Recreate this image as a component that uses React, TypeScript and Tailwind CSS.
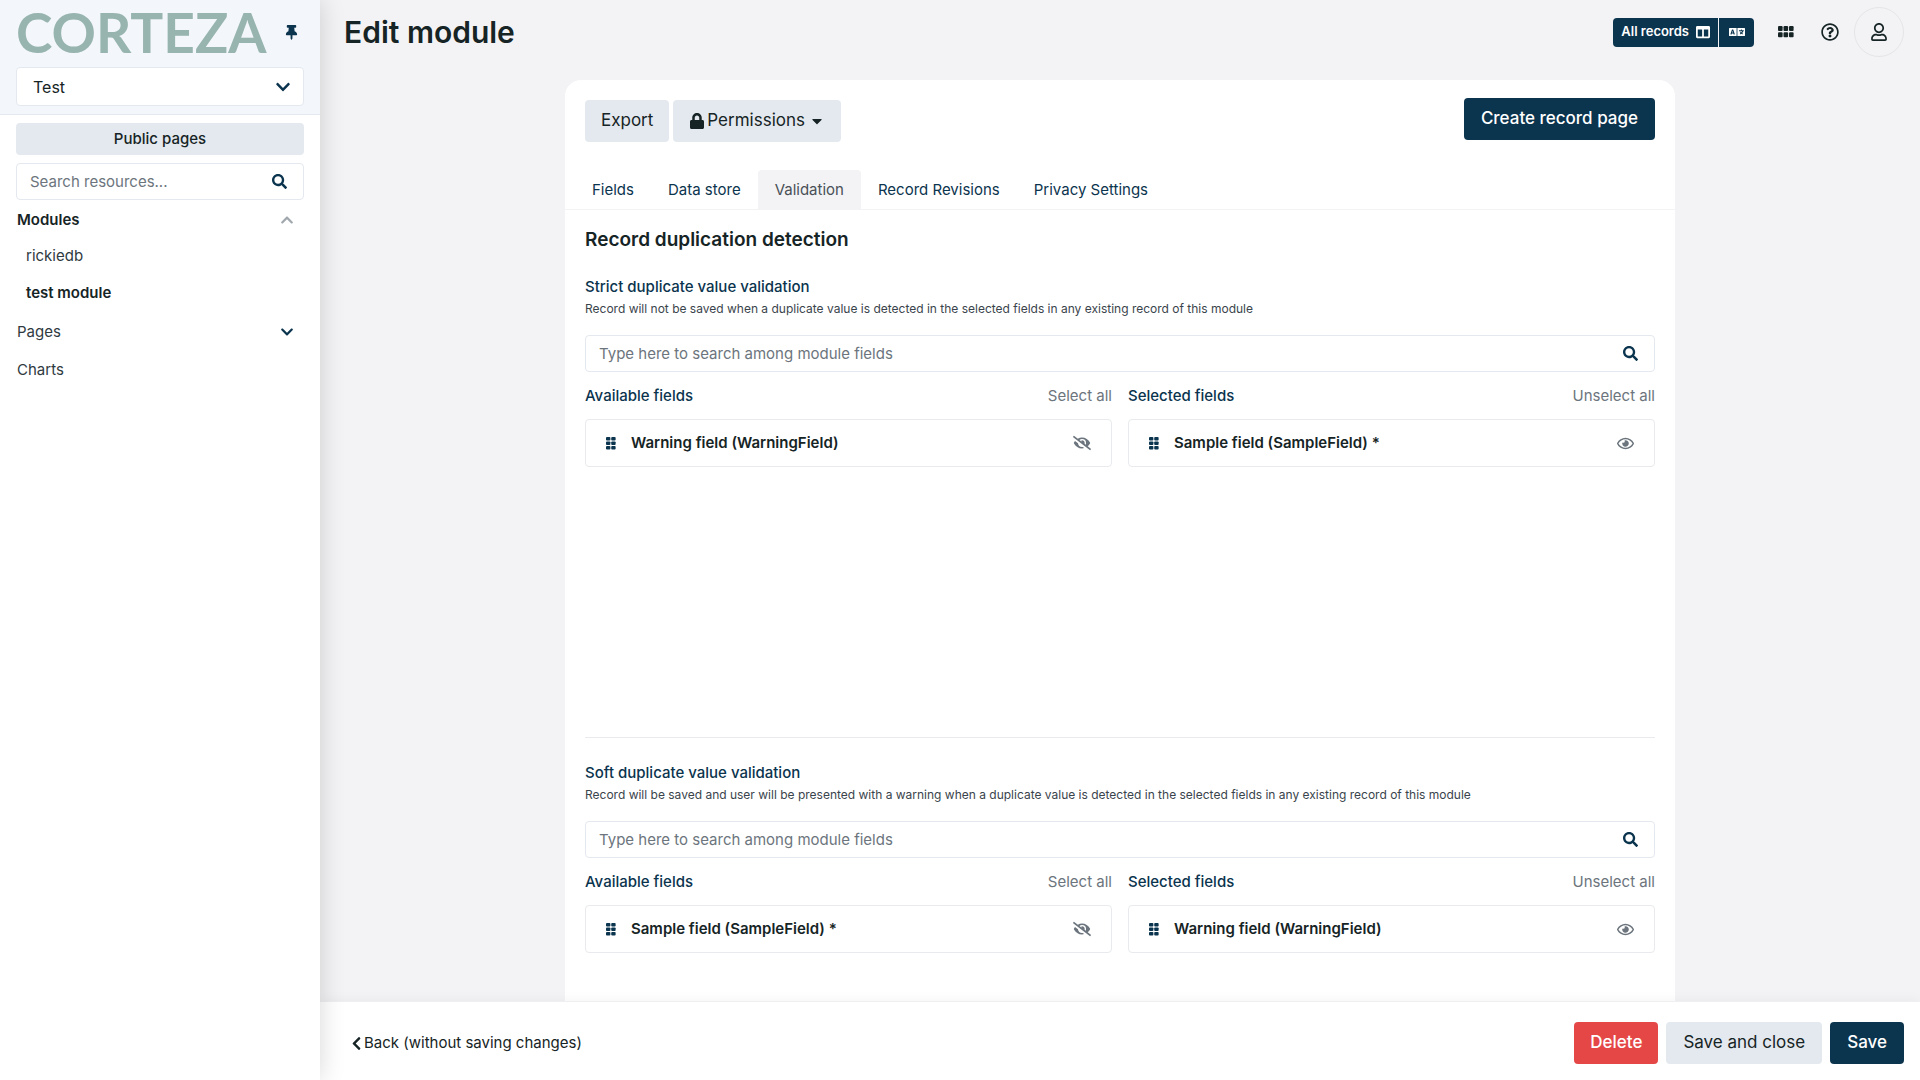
import type { ReactNode } from "react";
import {
  FaCaretDown, FaChevronDown, FaChevronLeft, FaChevronUp, FaColumns, FaEyeSlash,
  FaLanguage, FaLock, FaRegEye, FaRegQuestionCircle, FaRegUser, FaSearch, FaThumbtack,
} from "react-icons/fa";

function DotGrid({ cols, rows, className }: { cols: number; rows: number; className: string }) {
  const cells = Array.from({ length: cols * rows }, (_, i) => ({ x: (i % cols) * 11, y: Math.floor(i / cols) * 11 }));
  return (
    <svg viewBox={`0 0 ${cols * 11 - 1} ${rows * 11 - 1}`} preserveAspectRatio="none" fill="currentColor" aria-hidden="true" className={className}>
      {cells.map(({ x, y }) => <rect key={`${x}-${y}`} x={x} y={y} width="9.2" height="8.8" rx="2" />)}
    </svg>
  );
}

function Sidebar() {
  return (
    <aside className="z-20 flex w-80 shrink-0 flex-col bg-white shadow-[0_0_24px_rgba(0,0,0,0.16)]">
      <div className="border-b border-[#e4e9ef] bg-[#f3f6fa] px-4 pb-2">
        <div className="flex h-[67px] items-center justify-between pr-[5px] pb-[3px]">
          <span className="font-[Lato] text-[55px] leading-[64px] font-bold text-[#97b4af]">CORTEZA</span>
          <button aria-label="Unpin sidebar" className="text-[#0b344e]"><FaThumbtack size={15} /></button>
        </div>
        <button className="flex h-[39px] w-full items-center justify-between rounded border border-[#e4e9ef] bg-white pr-3 pl-4 text-base">
          Test
          <FaChevronDown size={16} className="text-[#0b344e]" />
        </button>
      </div>
      <div className="flex flex-col gap-2 px-4 pt-2">
        <button className="h-8 rounded bg-[#e4e9ef] text-[15px] font-medium">Public pages</button>
        <SearchBox placeholder="Search resources..." />
      </div>
      <nav className="mt-[2px] flex flex-col pr-[26px] pl-[17px] text-[15px]">
        <div className="flex h-9 items-center justify-between font-semibold">
          <a href="#modules">Modules</a>
          <button aria-label="Collapse modules" className="text-[#a0a8ae]"><FaChevronUp size={14} /></button>
        </div>
        <a href="#rickiedb" className="flex h-9 items-center pl-[9px] text-[#2f3a3f]">rickiedb</a>
        <a href="#test-module" className="flex h-[38px] items-center pl-[9px] font-semibold">test module</a>
        <div className="flex h-10 items-center justify-between text-[#2f3a3f]">
          <a href="#pages">Pages</a>
          <button aria-label="Expand pages" className="text-[#0b344e]"><FaChevronDown size={14} /></button>
        </div>
        <a href="#charts" className="flex h-9 items-center text-[#2f3a3f]">Charts</a>
      </nav>
    </aside>
  );
}

function SearchBox({ placeholder }: { placeholder: string }) {
  return (
    <div className="flex h-[37px] items-center rounded border border-[#e4e9ef] bg-white pr-4">
      <input type="text" aria-label={placeholder} placeholder={placeholder}
        className="h-full min-w-0 flex-1 bg-transparent px-[13px] text-[15px] outline-none placeholder:text-[#6c757d]" />
      <button aria-label="Search" className="text-[#0b344e]"><FaSearch size={15} /></button>
    </div>
  );
}

function TopBar() {
  return (
    <header className="flex h-16 shrink-0 items-center justify-between pr-4 pl-6">
      <h1 className="text-[30px] leading-9 font-semibold">Edit module</h1>
      <div className="flex items-center">
        <div className="flex gap-px text-[13px] font-semibold text-white">
          <button className="flex h-[29px] items-center gap-[7px] rounded-l bg-[#0b344e] px-2">All records <FaColumns size={14} /></button>
          <button aria-label="Translate" className="flex h-[29px] w-[35px] items-center justify-center rounded-r bg-[#0b344e]"><FaLanguage size={16} /></button>
        </div>
        <button aria-label="Applications" className="ml-6"><DotGrid cols={3} rows={2} className="h-3 w-4" /></button>
        <button aria-label="Help" className="ml-[27px]"><FaRegQuestionCircle size={18} /></button>
        <button aria-label="Profile" className="ml-[15px] flex size-[50px] items-center justify-center rounded-full border border-[#e4e5e8]"><FaRegUser size={18} /></button>
      </div>
    </header>
  );
}

const tabs = ["Fields", "Data store", "Validation", "Record Revisions", "Privacy Settings"];

function Field({ name, selected }: { name: string; selected?: boolean }) {
  return (
    <div className="flex h-12 items-center rounded border border-[#e8eaed] px-5">
      <DotGrid cols={2} rows={3} className="h-[13px] w-[10px] shrink-0 text-[#0b344e]" />
      <span className="ml-[15px] flex-1 text-[15px] font-semibold">{name}</span>
      <button aria-label={selected ? "Unselect field" : "Select field"} className="text-[#6c757d]">
        {selected ? <FaRegEye size={17} /> : <FaEyeSlash size={18} />}
      </button>
    </div>
  );
}

function Column({ label, action, children }: { label: string; action: string; children: ReactNode }) {
  return (
    <div>
      <div className="flex h-[47px] items-center justify-between pt-[2px] text-[15px]">
        <h4 className="font-medium text-[#0b344e]">{label}</h4>
        <button className="text-[#6c757d]">{action}</button>
      </div>
      {children}
    </div>
  );
}

function Picker({ title, text, available, selected }: { title: string; text: string; available: string; selected: string }) {
  return (
    <section>
      <h3 className="text-[15px] leading-6 font-medium text-[#0b344e]">{title}</h3>
      <p className="mb-4 text-xs leading-5 text-[#3a444c]">{text}</p>
      <SearchBox placeholder="Type here to search among module fields" />
      <div className="grid grid-cols-2 gap-4">
        <Column label="Available fields" action="Select all"><Field name={available} /></Column>
        <Column label="Selected fields" action="Unselect all"><Field name={selected} selected /></Column>
      </div>
    </section>
  );
}

export default function App() {
  return (
    <div className="flex h-screen overflow-hidden bg-[#f3f3f5] font-[Inter,sans-serif] text-[#162425]">
      <Sidebar />
      <div className="flex min-w-0 flex-1 flex-col">
        <TopBar />
        <main className="flex min-h-0 flex-1 justify-center overflow-hidden px-4 pt-4">
          <div className="flex w-full max-w-[1110px] flex-col rounded-t-2xl bg-white">
            <div className="flex items-start justify-between px-5 pt-[18px] text-[17px]">
              <div className="flex gap-1 pt-[2px]">
                <button className="h-[42px] rounded bg-[#e4e9ef] px-4">Export</button>
                <button className="flex h-[42px] items-center rounded bg-[#e4e9ef] px-4">
                  <FaLock size={16} className="mr-[2px]" />Permissions<FaCaretDown size={16} className="ml-1" />
                </button>
              </div>
              <button className="h-[42px] rounded bg-[#0b344e] px-[17px] font-medium text-white">Create record page</button>
            </div>
            <div role="tablist" className="mt-7 flex border-b border-[#f3f3f5] px-[10px] text-[15px]">
              {tabs.map((tab) => (
                <button key={tab} role="tab" aria-selected={tab === "Validation"}
                  className="h-[39px] rounded-t px-[17px] pt-[2px] text-[#0b344e] aria-selected:bg-[#f3f3f5] aria-selected:text-[#495057]">{tab}</button>
              ))}
            </div>
            <div className="px-5 pt-4">
              <h2 className="mb-[21px] text-[19px] leading-7 font-semibold">Record duplication detection</h2>
              <Picker title="Strict duplicate value validation" text="Record will not be saved when a duplicate value is detected in the selected fields in any existing record of this module"
                available="Warning field (WarningField)" selected="Sample field (SampleField) *" />
              <hr className="mt-[270px] mb-[23px] border-[#e8eaed]" />
              <Picker title="Soft duplicate value validation" text="Record will be saved and user will be presented with a warning when a duplicate value is detected in the selected fields in any existing record of this module"
                available="Sample field (SampleField) *" selected="Warning field (WarningField)" />
            </div>
          </div>
        </main>
        <footer className="z-10 flex shrink-0 items-center gap-2 border-t border-[#eeeff1] bg-white px-4 pt-5 pb-4 text-[17px] shadow-[0_0_12px_rgba(0,0,0,0.05)]">
          <a href="#back" className="mr-auto flex items-center pl-[13px] text-[15px]"><FaChevronLeft size={15} />Back (without saving changes)</a>
          <button className="h-[42px] rounded bg-[#e54747] px-4 font-medium text-white">Delete</button>
          <button className="h-[42px] rounded bg-[#e4e9ef] px-[17px]">Save and close</button>
          <button className="h-[42px] rounded bg-[#0b344e] px-[17px] font-medium text-white">Save</button>
        </footer>
      </div>
    </div>
  );
}
